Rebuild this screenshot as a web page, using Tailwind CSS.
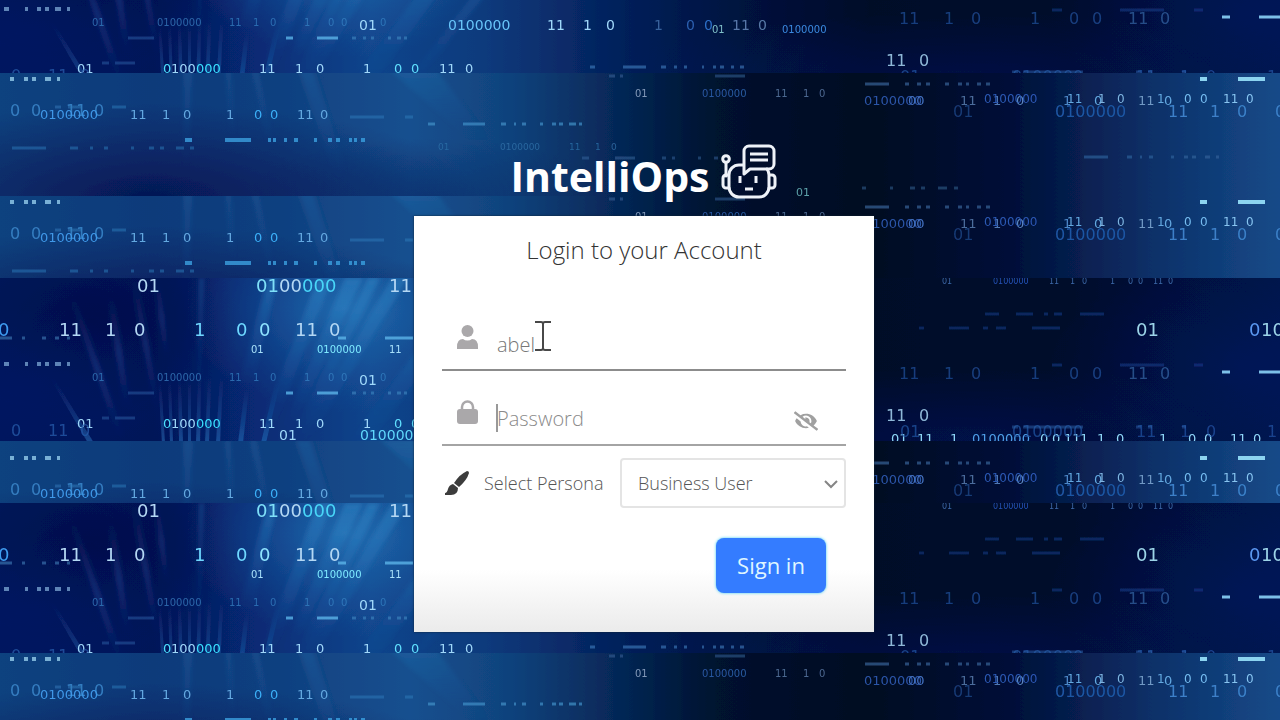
<!DOCTYPE html>
<html lang="en">
<head>
<meta charset="utf-8">
<meta name="viewport" content="width=device-width, initial-scale=1">
<title>IntelliOps – Login</title>
<script src="https://cdn.jsdelivr.net/npm/@tailwindcss/browser@4"></script>
</head>
<body class="bg-[#020d33] font-['Open_Sans',sans-serif]">
<div class="relative isolate flex min-h-screen flex-col items-center overflow-hidden pt-[140px] pl-2">

  <!-- Binary code backdrop: two bands, repeated down the page -->
  <svg class="absolute inset-0 -z-10 h-full w-full font-['DejaVu_Sans',sans-serif]" viewBox="0 0 1280 720" preserveAspectRatio="xMidYMid slice" aria-hidden="true">
    <defs>
      <linearGradient id="aBase" x1="0" x2="1280" y1="0" y2="0" gradientUnits="userSpaceOnUse">
        <stop offset="0" stop-color="#03195c"/><stop offset=".12" stop-color="#041558"/><stop offset=".2" stop-color="#072a74"/><stop offset=".29" stop-color="#11458c"/><stop offset=".38" stop-color="#0d3a7c"/><stop offset=".48" stop-color="#04215c"/><stop offset=".58" stop-color="#01123e"/><stop offset=".68" stop-color="#000c28"/><stop offset=".84" stop-color="#000d2c"/><stop offset="1" stop-color="#02134a"/>
      </linearGradient>
      <linearGradient id="bBase" x1="0" x2="1280" y1="0" y2="0" gradientUnits="userSpaceOnUse">
        <stop offset="0" stop-color="#11427f"/><stop offset=".12" stop-color="#0e3a7a"/><stop offset=".22" stop-color="#104080"/><stop offset=".32" stop-color="#16508f"/><stop offset=".4" stop-color="#10427c"/><stop offset=".48" stop-color="#062858"/><stop offset=".56" stop-color="#01122f"/><stop offset=".68" stop-color="#000b22"/><stop offset=".79" stop-color="#020f38"/><stop offset=".9" stop-color="#0c3068"/><stop offset="1" stop-color="#154a88"/>
      </linearGradient>
      <radialGradient id="glow"><stop offset="0" stop-color="#2c82c4" stop-opacity=".65"/><stop offset="1" stop-color="#1a62aa" stop-opacity="0"/></radialGradient>
      <radialGradient id="shade"><stop offset="0" stop-color="#020b48" stop-opacity=".75"/><stop offset="1" stop-color="#020b48" stop-opacity="0"/></radialGradient>
      <radialGradient id="violet"><stop offset="0" stop-color="#04186a" stop-opacity=".45"/><stop offset="1" stop-color="#04186a" stop-opacity="0"/></radialGradient>
      <linearGradient id="ray" x1="0" x2="0" y1="0" y2="1"><stop offset="0" stop-color="#3a9ad8" stop-opacity=".36"/><stop offset="1" stop-color="#2068b4" stop-opacity="0"/></linearGradient>
      <linearGradient id="thin" x1="0" x2="0" y1="0" y2="1"><stop offset="0" stop-color="#2a70c0" stop-opacity="0"/><stop offset=".5" stop-color="#2a70c0" stop-opacity=".3"/><stop offset="1" stop-color="#2068b4" stop-opacity="0"/></linearGradient>
      <linearGradient id="rise" x1="0" x2="0" y1="1" y2="0"><stop offset="0" stop-color="#2f8cd8" stop-opacity=".42"/><stop offset="1" stop-color="#2068b4" stop-opacity="0"/></linearGradient>
      <filter id="soft" x="-20%" y="-20%" width="140%" height="140%"><feGaussianBlur stdDeviation="2"/></filter>
      <filter id="focus"><feGaussianBlur stdDeviation="0.6"/></filter>

      <g id="bandA">
        <rect y="-10" width="1280" height="185" fill="url(#aBase)"/>
        <ellipse cx="90" cy="45" rx="150" ry="100" fill="url(#shade)"/>
        <ellipse cx="345" cy="30" rx="160" ry="105" fill="url(#glow)"/>
        <ellipse cx="20" cy="110" rx="180" ry="80" fill="url(#violet)"/>
        <ellipse cx="960" cy="160" rx="360" ry="70" fill="url(#violet)"/>
        <ellipse cx="1250" cy="90" rx="200" ry="110" fill="url(#violet)"/>
        <g fill="url(#ray)" filter="url(#soft)">
          <path d="M268 0h10l-26 110h-14z"/><path d="M318 0h14l-58 150h-14z"/><path d="M345 0h18l-70 150h-10z"/><path d="M368 0h12l-80 165h-12z"/><path d="M392 0h16l-100 165h-14z"/><path d="M470 0h20l-120 165h-22z"/><path d="M530 0h12l-130 165h-12z"/><path d="M200 0h3l-3 120h-3z"/>
        </g>
        <g fill="url(#thin)" filter="url(#soft)">
          <path d="M132 0h4l24 130h-6z"/><path d="M108 20h5l18 110h-7z"/><path d="M70 20h5l50 140h-7z"/><path d="M155 0h4l10 80h-5z"/>
        </g>
        <g fill="url(#rise)">
          <path d="M158 100h3l4 65h-3z"/><path d="M168 100h3l2 65h-3z"/><path d="M178 100h3l2 65h-4z"/><path d="M188 100h3v65h-3z"/><path d="M198 100h3l-1 65h-4z"/><path d="M208 100h3l-2 65h-4z"/><path d="M220 100h3l-3 65h-4z"/><path d="M245 110h4l-6 55h-5z"/><path d="M275 105h5l-14 60h-5z"/><path d="M50 100h4l40 65h-6z"/>
        </g>
        <g font-size="18" fill="#b4d8f4">
          <text y="14"><tspan x="137">01</tspan><tspan x="256" fill="#7fe0f8">01</tspan><tspan x="279">00</tspan><tspan x="302" fill="#48d6f8">000</tspan><tspan x="389">11</tspan></text>
          <text y="58"><tspan x="-2" fill="#3e9cf0">0</tspan><tspan x="59">11</tspan><tspan x="105">1</tspan><tspan x="134">0</tspan><tspan x="194" fill="#6fd8ff">1</tspan><tspan x="236" fill="#6fd8ff">0</tspan><tspan x="259" fill="#8fe4ff">0</tspan><tspan x="295">11</tspan><tspan x="329">0</tspan><tspan x="1136" fill="#9cd4e8">01</tspan><tspan x="1249" fill="#5a98f0">0</tspan><tspan x="1261" fill="#9cd4e8">100000</tspan></text>
        </g>
        <g font-size="10">
          <text y="75" fill="#a8e0fa"><tspan x="251">01</tspan><tspan x="317" fill="#7feaff">0100000</tspan><tspan x="389">11</tspan></text>
          <text y="103" fill="#3a86c8" opacity=".7"><tspan x="92">01</tspan><tspan x="157">0100000</tspan><tspan x="229">11</tspan><tspan x="253">1</tspan><tspan x="270">0</tspan><tspan x="304">1</tspan><tspan x="328">0</tspan><tspan x="341">0</tspan><tspan x="380">0</tspan></text>
          <text y="110"><tspan x="712" fill="#7fc0c8">01</tspan><tspan x="782" fill="#3a88e0">0100000</tspan></text>
        </g>
        <g font-size="14" fill="#a0d8fa">
          <text y="107"><tspan x="359">01</tspan><tspan x="448" fill="#68c4f8">0100000</tspan><tspan x="547">11</tspan><tspan x="583">1</tspan><tspan x="606">0</tspan><tspan x="654" fill="#38629c">1</tspan><tspan x="686" fill="#2c5fb0">0</tspan><tspan x="704" fill="#2c6fc8">0</tspan><tspan x="732" fill="#5878a8">11</tspan><tspan x="758" fill="#5878a8">0</tspan></text>
          <text y="150" font-size="13"><tspan x="77">01</tspan><tspan x="163" fill="#4ce0ff">0</tspan><tspan x="171">100</tspan><tspan x="196" fill="#38e0ff">000</tspan><tspan x="259">11</tspan><tspan x="295">1</tspan><tspan x="316">0</tspan><tspan x="363">1</tspan><tspan x="394" fill="#5fe0ff">0</tspan><tspan x="411" fill="#5fe0ff">0</tspan><tspan x="439">11</tspan><tspan x="465">0</tspan></text>
          <text y="162"><tspan x="279">01</tspan><tspan x="360" fill="#5fd8fc">0100000</tspan></text>
          <text y="165" font-size="13" fill="#8fd8f8"><tspan x="891">01</tspan><tspan x="917">11</tspan><tspan x="950">1</tspan><tspan x="972" fill="#4f9fe8">0100000</tspan><tspan x="1040">0</tspan><tspan x="1052">0</tspan><tspan x="1064">11</tspan><tspan x="1080">1</tspan><tspan x="1097">1</tspan><tspan x="1116">0</tspan><tspan x="1159">1</tspan><tspan x="1188">0</tspan><tspan x="1204">0</tspan><tspan x="1230">11</tspan><tspan x="1253">0</tspan></text>
        </g>
        <g font-size="16" fill="#2458a8">
          <text y="158" opacity=".8"><tspan x="11">0</tspan><tspan x="48">11</tspan><tspan x="80">0</tspan></text>
          <text y="101" opacity=".65"><tspan x="899">11</tspan><tspan x="944">1</tspan><tspan x="971">0</tspan><tspan x="1030">1</tspan><tspan x="1069">0</tspan><tspan x="1092">0</tspan><tspan x="1128" fill="#3a70b0">11</tspan><tspan x="1160" fill="#3a70b0">0</tspan></text>
          <text y="143" fill="#8fb8d8"><tspan x="886">11</tspan><tspan x="919">0</tspan></text>
          <text y="159" opacity=".7"><tspan x="900">01</tspan><tspan x="1012">0100000</tspan><tspan x="1136">11</tspan><tspan x="1180">1</tspan><tspan x="1206">0</tspan><tspan x="1267">1</tspan></text>
        </g>
        <text y="6" font-size="8" fill="#3d68a8"><tspan x="942">01</tspan><tspan x="993" fill="#2553b8">0100000</tspan><tspan x="1049">11</tspan><tspan x="1070">1</tspan><tspan x="1082">0</tspan><tspan x="1110">1</tspan><tspan x="1128">0</tspan><tspan x="1138">0</tspan><tspan x="1153">11</tspan><tspan x="1168">0</tspan></text>
        <g fill="none" stroke-width="3">
          <path stroke="#5cb4e8" opacity=".8" d="M338 60h8M385 60h28M286 115h7M317 115h21"/>
          <path stroke="#4a94cc" opacity=".5" d="M0 60h12M22 60h3M42 60h4M55 60h4M67 60h3M352 115h4M363 115h3M371 115h3M388 115h3M397 115h4M404 115h3"/>
          <path stroke="#2a68b0" opacity=".45" d="M128 115h26M102 140h7M115 140h20"/>
          <path stroke="#8fc0e8" opacity=".65" stroke-width="4" d="M4 86h5M25 86h3M37 86h4M45 86h4M55 86h6M67 86h3"/>
          <path stroke="#3f7fc0" opacity=".6" d="M590 144h5M623 144h23M661 144h5M674 144h3M684 144h3M702 144h2M713 144h3M720 144h4M731 144h3M740 144h4"/>
          <path stroke="#1c489c" opacity=".45" d="M985 36h14M1016 36h17M1044 36h4M1054 36h8M1080 36h24M919 50h5M949 50h20M983 50h5M996 50h10M1032 50h28M1052 87h10M1120 87h44M1194 87h9"/>
          <path stroke="#7cc0e8" d="M1222 94h8M1259 94h40"/>
          <path stroke="#2a60a8" opacity=".5" d="M1012 149h6M1023 149h60M1136 149h5M1148 149h4M1182 149h4"/>
        </g>
      </g>

      <g id="bandB">
        <rect y="-20" width="1280" height="160" fill="url(#bBase)"/>
        <ellipse cx="150" cy="125" rx="330" ry="95" fill="url(#shade)"/>
        <ellipse cx="430" cy="125" rx="190" ry="60" fill="url(#shade)" opacity=".4"/>
        <g fill="url(#ray)" filter="url(#soft)" opacity=".5">
          <path d="M296 -12h14l40 120h-14z"/><path d="M250 -12h6l20 90h-8z"/><path d="M183 -12h10l-4 110h-6z"/><path d="M380 -12h50l60 80h-20z"/><path d="M225 -12h5l6 80h-6z"/>
        </g>
        <g font-size="14" fill="#64a8e0">
          <text y="43" font-size="16" fill="#3a88cc" opacity=".85"><tspan x="10">0</tspan><tspan x="31">0</tspan><tspan x="66">11</tspan><tspan x="94">0</tspan></text>
          <text y="46" font-size="13"><tspan x="40" fill="#3f98e8">0100000</tspan><tspan x="130">11</tspan><tspan x="162">1</tspan><tspan x="183">0</tspan><tspan x="226">1</tspan><tspan x="254" fill="#3bb0f8">0</tspan><tspan x="270" fill="#3bb0f8">0</tspan><tspan x="297">11</tspan><tspan x="320">0</tspan></text>
          <text y="32" font-size="13"><tspan x="864" fill="#2c56a8">0100000</tspan><tspan x="908" fill="#4472c0">00</tspan><tspan x="960" fill="#4b6c9c">11</tspan><tspan x="993" fill="#5078b4">1</tspan><tspan x="1016" fill="#5c88c0">0</tspan><tspan x="1063" fill="#4b88c8">1</tspan><tspan x="1094">0</tspan><tspan x="1138" fill="#7098c4">11</tspan><tspan x="1164">0</tspan></text>
          <text y="30" font-size="12"><tspan x="984" fill="#2b58b4">0100000</tspan><tspan x="1067">11</tspan><tspan x="1098" fill="#7fb4e0">1</tspan><tspan x="1117" fill="#7fb4e0">0</tspan><tspan x="1157">1</tspan><tspan x="1184" fill="#74bcf0">0</tspan><tspan x="1200" fill="#74bcf0">0</tspan><tspan x="1223" fill="#88c4f0">11</tspan><tspan x="1246" fill="#88c4f0">0</tspan></text>
          <text y="44" font-size="16" fill="#3c80c8"><tspan x="953" fill="#163a74">01</tspan><tspan x="1055" fill="#1e57a4">0100000</tspan><tspan x="1168">11</tspan><tspan x="1210">1</tspan><tspan x="1237">0</tspan><tspan x="1275">0</tspan></text>
        </g>
        <text y="24" font-size="10" fill="#4c6890"><tspan x="635" fill="#8098b8">01</tspan><tspan x="702" fill="#2858a0">0100000</tspan><tspan x="775">11</tspan><tspan x="803">1</tspan><tspan x="819">0</tspan></text>
        <text y="77" font-size="9" fill="#2f70a8" opacity=".8"><tspan x="438">01</tspan><tspan x="500">0100000</tspan><tspan x="569">11</tspan><tspan x="595">1</tspan><tspan x="611">0</tspan></text>
        <text y="123" font-size="11" fill="#5ca0a8"><tspan x="796">01</tspan></text>
        <g fill="none" stroke-width="3">
          <path stroke="#8cc4e4" stroke-width="4" opacity=".85" d="M10 6h4M24 6h4M32 6h4M45 6h6M57 6h3"/>
          <path stroke="#3ba0e0" stroke-width="4" opacity=".8" d="M185 67h7M225 67h26M268 67h3M273 67h3M284 67h3M294 67h4M314 67h3M328 67h4M336 67h4M349 67h3M354 67h3M361 67h4"/>
          <path stroke="#2f7cbc" opacity=".5" d="M55 34h6M68 34h14M112 34h14M350 44h34M405 44h8M12 75h34M70 75h8M90 75h3M104 75h4M131 75h3M149 75h5M160 75h4M176 75h8M190 75h4"/>
          <path stroke="#4290c8" opacity=".7" d="M428 51h7M463 51h22M501 51h5M514 51h2M522 51h4M540 51h3M552 51h4M559 51h4M569 51h7M579 51h3"/>
          <path stroke="#3a68a0" opacity=".5" d="M582 85h7M615 85h20M662 85h4M672 85h3M698 85h3M714 85h4M609 3h6M620 3h3M715 3h30"/>
          <path stroke="#8cd4f0" stroke-width="4" d="M1200 6h7M1238 6h27"/>
          <path stroke="#3c6ca0" opacity=".65" d="M865 11h24M905 11h4M917 11h4M926 11h4M945 11h4M958 11h4M966 11h3M977 11h4M986 11h4"/>
          <path stroke="#2f6098" opacity=".7" d="M1084 84h24M1127 84h5M1140 84h2M1149 84h4M1171 84h3M1184 84h4M1192 84h4M1205 84h5M1216 84h3"/>
          <path stroke="#345c88" opacity=".6" d="M862 115h4M890 115h3M910 115h5M921 115h4M938 115h9M954 115h4"/>
        </g>
      </g>
    </defs>
    <g filter="url(#focus)">
      <svg y="0" width="1280" height="73" viewBox="0 77 1280 73"><use href="#bandA"/></svg>
      <svg y="73" width="1280" height="123" viewBox="0 0 1280 123"><use href="#bandB"/></svg>
      <svg y="196" width="1280" height="82" viewBox="0 0 1280 82"><use href="#bandB"/></svg>
      <svg y="278" width="1280" height="163" viewBox="0 0 1280 163"><use href="#bandA"/></svg>
      <svg y="441" width="1280" height="62" viewBox="0 -11 1280 62"><use href="#bandB"/></svg>
      <svg y="503" width="1280" height="150" viewBox="0 0 1280 150"><use href="#bandA"/></svg>
      <svg y="653" width="1280" height="67" viewBox="0 0 1280 67"><use href="#bandB"/></svg>
    </g>
  </svg>

  <header class="mb-4 flex h-15 items-center gap-2 text-white">
    <h1 class="pt-3 text-[41px] leading-[48px] font-bold">IntelliOps</h1>
    <svg class="h-[60px] w-[60px] text-[#eef2f8]" viewBox="0 0 60 60" fill="none" stroke="currentColor" stroke-width="3" stroke-linejoin="round" stroke-linecap="round" aria-hidden="true">
      <path d="M26 27v7l6-5h19a5 5 0 0 0 5-5V11a5 5 0 0 0-5-5H31a5 5 0 0 0-5 5z"/>
      <path d="M32 14h18M32 20h18" stroke-linecap="butt"/>
      <circle cx="8" cy="19" r="3.3"/><path d="M8 23v13"/>
      <path d="M25 25h-4a10 10 0 0 0-10 10v12a10 10 0 0 0 10 10h20a10 10 0 0 0 10-10V35q0-3-2-6"/>
      <path d="M10 35H8a3 3 0 0 0-3 3v7a3 3 0 0 0 3 3h3M52 35h2a3 3 0 0 1 3 3v7a3 3 0 0 1-3 3h-3"/>
      <path d="M22 36v7M38 36v7M27 49h8" stroke-linecap="butt"/>
    </svg>
  </header>

  <main class="w-full max-w-[460px] bg-linear-to-b from-white from-85% to-[#ebebeb] px-7 pt-4 pb-[39px] shadow-[0_0_2px_#123]">
    <h2 class="text-center text-2xl leading-9 font-light text-[#333]">Login to your Account</h2>
    <form class="mt-7">
      <div class="relative flex h-[75px] items-end gap-[19px] border-b-2 border-[#8c8c8c] pl-[15px]">
        <label for="user" aria-label="Username" class="mb-5 shrink-0">
          <svg class="h-6 w-[21px] fill-[#aaa8aa]" viewBox="0 0 21 24" aria-hidden="true"><circle cx="10.500" cy="6" r="6"/><path d="M0 24v-2q0-8 6-8 2 1.500 4.500 1.500T15 14q6 0 6 8v2z"/></svg>
        </label>
        <input id="user" type="text" value="abel" class="h-[50px] min-w-0 flex-1 bg-transparent text-xl font-light text-[#777] outline-none">
        <svg class="absolute top-[25px] left-[93px] h-[30px] w-4" viewBox="0 0 16 30" fill="none" stroke="#484848" stroke-width="2" aria-hidden="true"><path d="M0 1h6q2 0 2 2 0-2 2-2h6M8 2v26M0 29h6q2 0 2-2 0 2 2 2h6"/></svg>
      </div>
      <div class="relative flex h-[75px] items-end gap-[19px] border-b-2 border-[#a4a4a4] pr-7 pl-[15px]">
        <label for="pass" aria-label="Password" class="mb-5 shrink-0">
          <svg class="h-6 w-[21px]" viewBox="0 0 21 24" aria-hidden="true"><rect y="9" width="21" height="15" rx="3" fill="#aaa8aa"/><path d="M5 11V7a5.500 5.500 0 0 1 11 0v4" fill="none" stroke="#aaa8aa" stroke-width="2.500"/></svg>
        </label>
        <input id="pass" type="password" placeholder="Password" class="h-[52px] min-w-0 flex-1 bg-transparent text-xl font-light text-[#777] outline-none placeholder:text-[#8a8a8a]">
        <span class="absolute bottom-3 left-[54px] h-7 w-0.5 bg-[#999]"></span>
        <button type="button" aria-label="Show password" class="mb-[13px] shrink-0">
          <svg class="h-5 w-6" viewBox="0 0 640 512" fill="#a0a0a0" aria-hidden="true"><path d="M320 400c-75.900 0-137.300-58.700-142.900-133.100L72.200 185.800c-13.800 17.300-26.500 35.600-36.700 55.600a32.400 32.400 0 0 0 0 29.200C89.700 376.400 197.100 448 320 448c26.900 0 52.900-4 77.900-10.500L346 397.400a144.100 144.100 0 0 1-26 2.600zm313.800 58.100l-110.600-85.400a331.300 331.300 0 0 0 81.200-102.100 32.400 32.400 0 0 0 0-29.200C550.300 135.600 442.900 64 320 64a308.200 308.200 0 0 0-147.300 37.700L45.500 3.400A16 16 0 0 0 23 6.200L3.400 31.500A16 16 0 0 0 6.200 53.900l588.400 454.700a16 16 0 0 0 22.400-2.800l19.700-25.300a16 16 0 0 0-2.900-22.400zM450.100 316.400l-39.300-30.400A94.800 94.800 0 0 0 416 256a94.800 94.800 0 0 0-121.300-92.200A47.700 47.700 0 0 1 304 192a46.600 46.600 0 0 1-1.500 10l-73.600-56.900A142.300 142.300 0 0 1 320 112a143.900 143.900 0 0 1 144 144c0 21.600-5.300 41.800-13.900 60.400z"/></svg>
        </button>
      </div>
      <div class="mt-3 flex items-center pl-[3px]">
        <svg class="mr-[15px] h-6 w-6 shrink-0 fill-[#3c3c3c]" viewBox="0 0 24 24" aria-hidden="true"><path d="M22 0q2 0 2 2-2 7-10 14l-5-4Q15 3 22 0z"/><path d="M8 13l5 4q0 7-7 7H0v-2q2 0 3-4 1-4 5-5z"/></svg>
        <label for="persona" class="text-lg leading-7 font-light text-[#555]">Select Persona</label>
        <div class="relative ml-auto w-[226px]">
          <select id="persona" class="h-[50px] w-full appearance-none rounded border-2 border-[#e4e4e4] bg-white pl-4 text-lg font-light text-[#555]">
            <option>Business User</option>
          </select>
          <svg class="pointer-events-none absolute top-[21px] right-2 h-2.5 w-3.5" viewBox="0 0 14 10" fill="none" stroke="#858585" stroke-width="2" aria-hidden="true"><path d="M1 2l6 6 6-6"/></svg>
        </div>
      </div>
      <div class="mt-[30px] flex justify-end pr-5">
        <button type="submit" class="h-[55px] w-[110px] rounded-lg bg-[#347cff] text-[22px] text-[#dff6ff] shadow-[0_0_3px_#36c8f0]">Sign in</button>
      </div>
    </form>
  </main>
</div>
</body>
</html>
